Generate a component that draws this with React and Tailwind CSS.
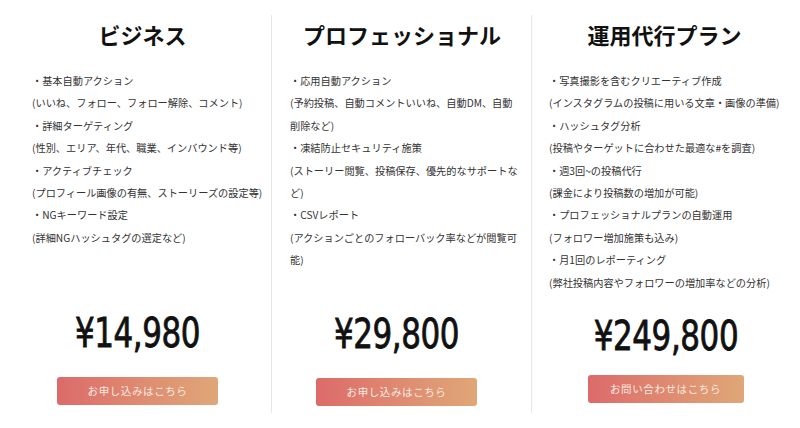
import React from "react";

const jp = { fontFamily: '"Noto Sans CJK JP", "Noto Sans", sans-serif' };
const priceFont = { fontFamily: '"DejaVu Sans Condensed", "DejaVu Sans", sans-serif' };

function Column({ title, items, price, button, className, titleClass, priceClass, btnClass }) {
  return (
    <div className={"flex flex-col h-full " + className}>
      <h2 className={"mt-[3px] h-[32px] leading-[32px] text-[22px] font-bold text-[#111] text-center whitespace-nowrap " + titleClass}>{title}</h2>
      <ul className="mt-[20px] text-[10.2px] leading-[22.4px] text-[#333] whitespace-nowrap">
        {items.map((t, i) => (
          <li key={i}>{t}</li>
        ))}
      </ul>
      <div className="mt-auto flex flex-col items-center">
        <div
          className={"text-[41px] leading-[44px] text-[#111] tracking-[-0.5px] [font-stretch:condensed] scale-x-[0.84] [-webkit-text-stroke:0.8px_#111] " + priceClass}
          style={priceFont}
        >
          {price}
        </div>
        <button
          className={"h-[28px] rounded-[3px] bg-gradient-to-r from-[#dc6a6a] to-[#dfa777] text-[10.5px] tracking-[0.6px] text-[#fcebe3] " + btnClass}
        >
          {button}
        </button>
      </div>
    </div>
  );
}

export default function App() {
  return (
    <div className="w-[800px] h-[428px] bg-white flex py-[15px]" style={jp}>
      <Column
        className="w-[271px] pl-[32px] pr-[18px]"
        title="ビジネス"
        titleClass=""
        priceClass="-ml-[10px] -mb-[3px]"
        btnClass="w-[161px] mt-[25px] mb-[8px] -ml-[10px]"
        items={[
          "・基本自動アクション",
          "(いいね、フォロー、フォロー解除、コメント)",
          "・詳細ターゲティング",
          "(性別、エリア、年代、職業、インバウンド等)",
          "・アクティブチェック",
          "(プロフィール画像の有無、ストーリーズの設定等)",
          "・NGキーワード設定",
          "(詳細NGハッシュタグの選定など)",
        ]}
        price="¥14,980"
        button="お申し込みはこちら"
      />
      <Column
        className="w-[260px] border-l border-[#e6e6e6] pl-[18px] pr-[20px]"
        title="プロフェッショナル"
        titleClass="ml-[3px]"
        priceClass="-ml-[8px] -mb-[3px]"
        btnClass="w-[161px] mt-[25px] mb-[7px] -ml-[8px]"
        items={[
          "・応用自動アクション",
          "(予約投稿、自動コメントいいね、自動DM、自動",
          "削除など)",
          "・凍結防止セキュリティ施策",
          "(ストーリー閲覧、投稿保存、優先的なサポートな",
          "ど)",
          "・CSVレポート",
          "(アクションごとのフォローバック率などが閲覧可",
          "能)",
        ]}
        price="¥29,800"
        button="お申し込みはこちら"
      />
      <Column
        className="w-[269px] border-l border-[#e6e6e6] pl-[17px] pr-[10px]"
        title="運用代行プラン"
        titleClass="-ml-[10px]"
        priceClass="-ml-[8px] -mb-[6px]"
        btnClass="w-[156px] mt-[23px] mb-[10px] -ml-[8px]"
        items={[
          "・写真撮影を含むクリエーティブ作成",
          "(インスタグラムの投稿に用いる文章・画像の準備)",
          "・ハッシュタグ分析",
          "(投稿やターゲットに合わせた最適な#を調査)",
          "・週3回~の投稿代行",
          "(課金により投稿数の増加が可能)",
          "・プロフェッショナルプランの自動運用",
          "(フォロワー増加施策も込み)",
          "・月1回のレポーティング",
          "(弊社投稿内容やフォロワーの増加率などの分析)",
        ]}
        price="¥249,800"
        button="お問い合わせはこちら"
      />
    </div>
  );
}
